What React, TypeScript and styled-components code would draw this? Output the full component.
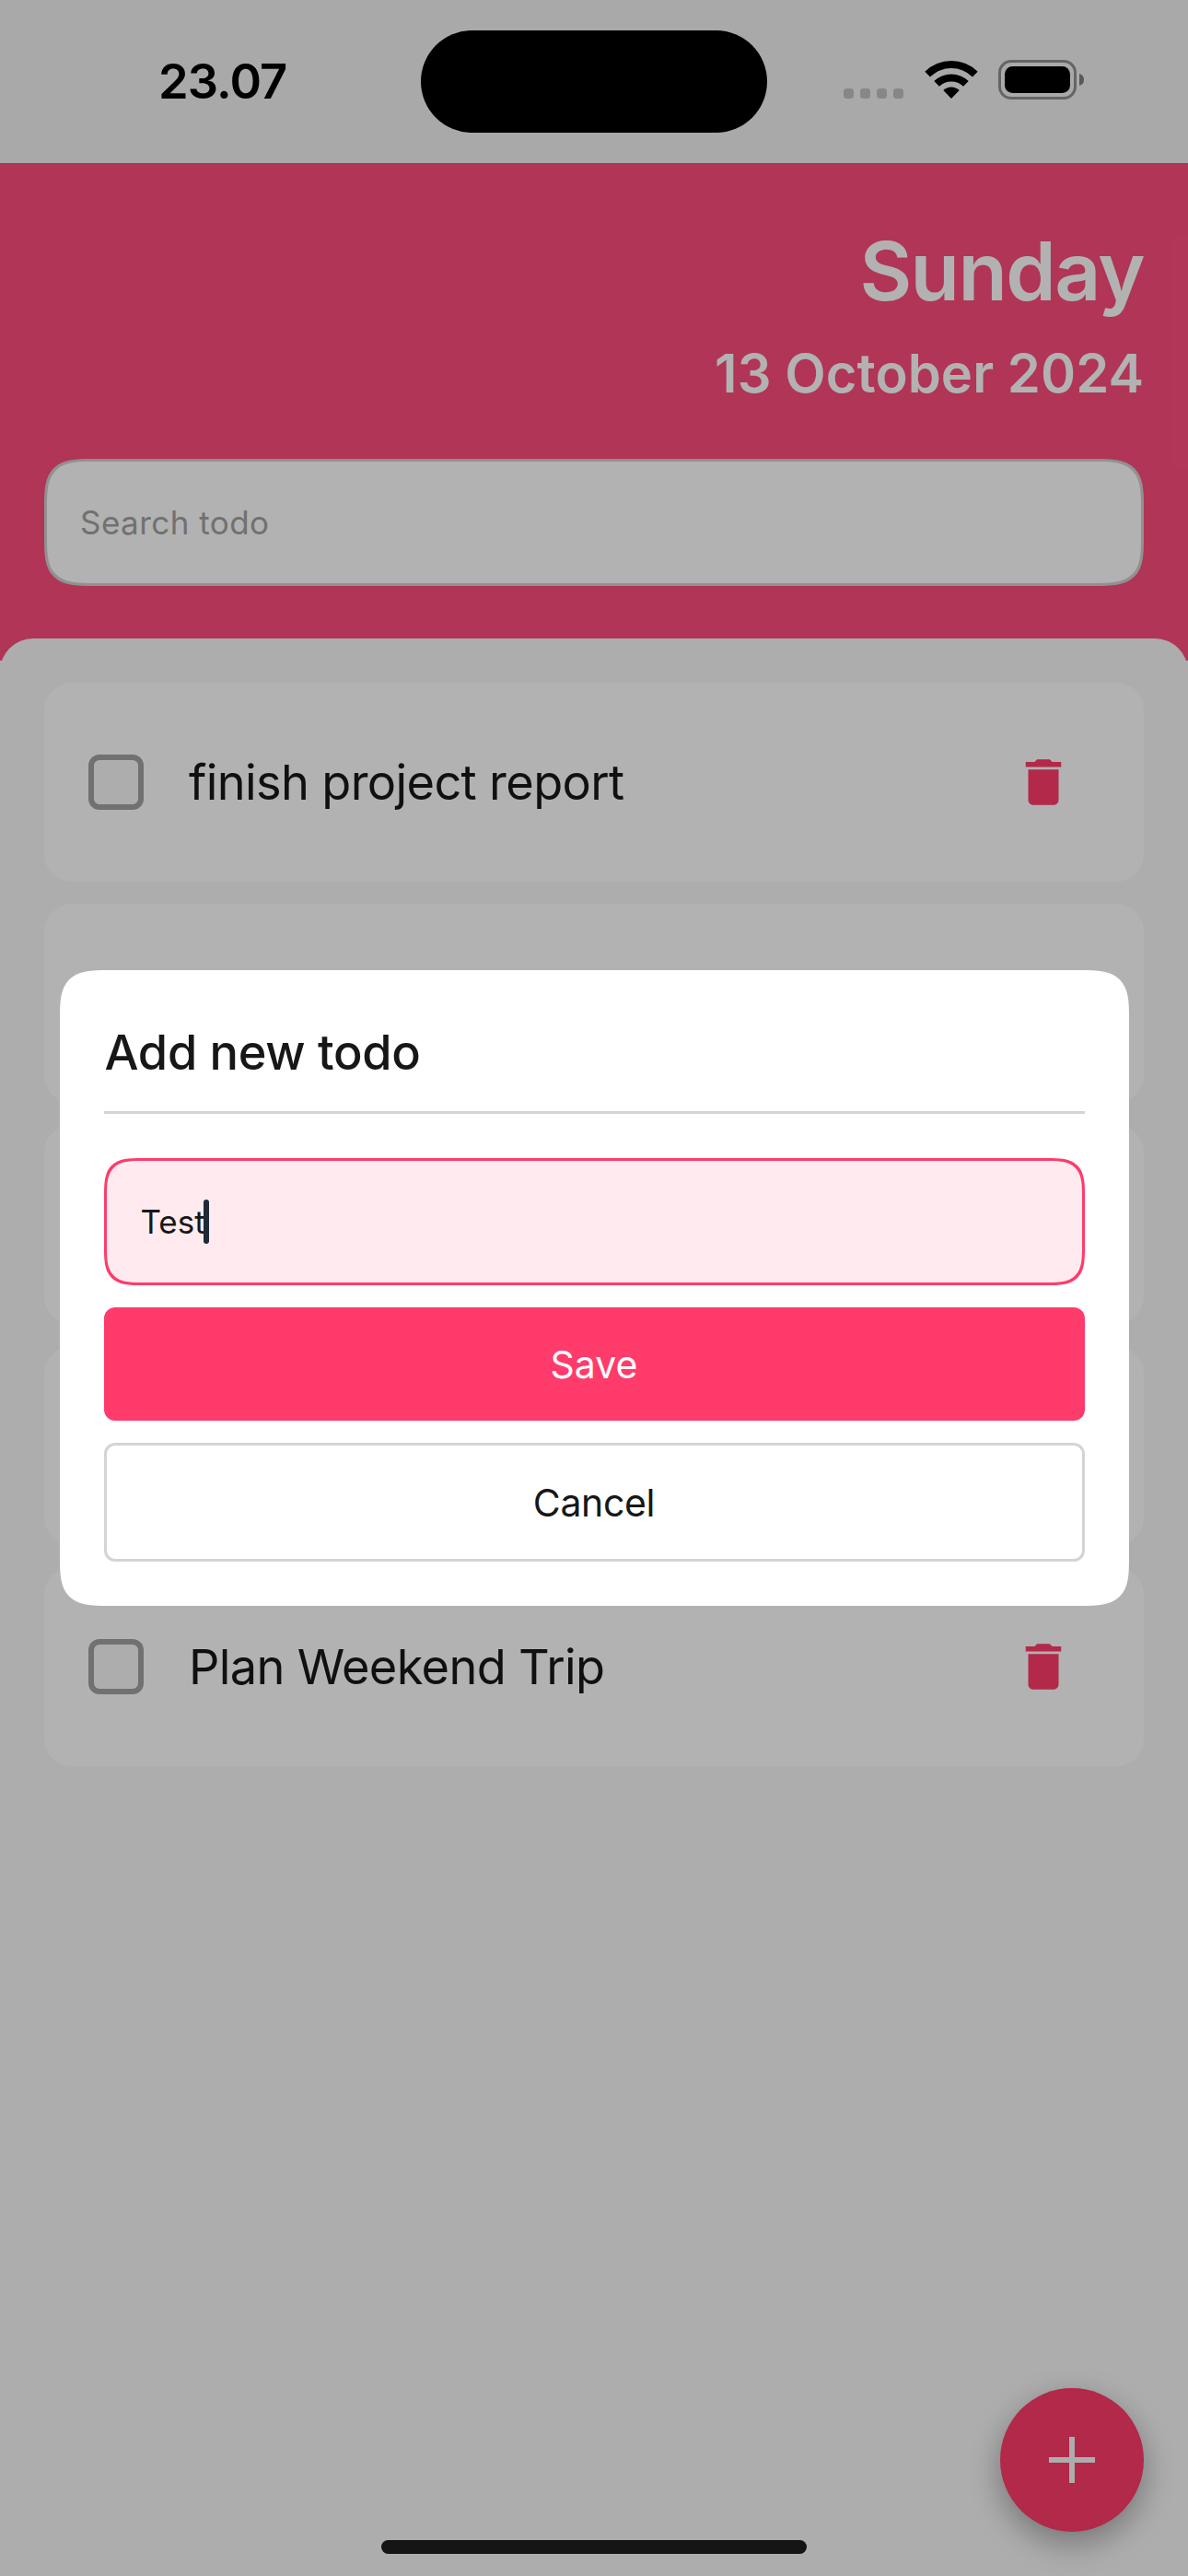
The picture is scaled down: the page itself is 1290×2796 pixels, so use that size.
import React from "react";
import styled, { createGlobalStyle } from "styled-components";

const GlobalStyle = createGlobalStyle`
  * { box-sizing: border-box; }
  html, body { margin: 0; padding: 0; background: #f8f8f8; }
  body { font-family: Inter, "Liberation Sans", sans-serif; color: #171717; }
  button, input { font: inherit; margin: 0; }
`;

const Screen = styled.div`
  position: relative;
  width: 1290px;
  height: 2796px;
  overflow: hidden;
  display: flex;
  flex-direction: column;
  background: #f8f8f8;
`;

const StatusBar = styled.div`
  flex: none;
  height: 177px;
  display: grid;
  grid-template-columns: 457px 376px 1fr;
  align-items: start;
  background: #f3f3f3;
`;

const Time = styled.div`
  padding: 58px 0 0 172px;
  font-size: 52.4px;
  line-height: 60px;
  font-weight: 600;
  color: #000;
  letter-spacing: -0.9px;
  white-space: nowrap;
`;

const Island = styled.div`
  height: 111px;
  margin-top: 33px;
  border-radius: 56px;
  background: #000;
`;

const StatusIcons = styled.div`
  display: flex;
  align-items: flex-end;
  padding: 65px 0 0 83px;
`;

const Dots = styled.div`
  display: flex;
  gap: 7px;
  padding-bottom: 1px;
`;

const Dot = styled.i`
  width: 11px;
  height: 11px;
  border-radius: 3.5px;
  background: #c2c2c2;
`;

const WifiIcon = styled.svg`
  width: 58px;
  height: 43px;
  margin-left: 22.5px;
`;

const BatteryIcon = styled.svg`
  width: 94px;
  height: 43px;
  margin-left: 22.5px;
`;

const Header = styled.header`
  flex: none;
  height: 540px;
  padding: 64px 48px 0;
  display: flex;
  flex-direction: column;
  background: #fe4d7c;
  color: #fff;
`;

const Day = styled.h1`
  margin: 0;
  height: 108px;
  line-height: 106px;
  font-size: 87.3px;
  font-weight: 600;
  text-align: right;
  letter-spacing: -1.6px;
`;

const DateLine = styled.h2`
  margin: 20px 0 0;
  height: 72px;
  line-height: 73px;
  font-size: 57.8px;
  font-weight: 600;
  text-align: right;
  letter-spacing: 0.1px;
`;

const Search = styled.div`
  height: 138px;
  margin-top: 57px;
  padding: 0 36px;
  border: 3px solid #d0d0d0;
  border-radius: 36px;
  background: #fff;
  color: #a3a3a3;
  font-size: 35px;
  line-height: 132px;
  letter-spacing: 0.45px;
  @supports (corner-shape: squircle) {
    border-radius: 53px;
    corner-shape: superellipse(1.7);
  }
`;

const List = styled.main`
  flex: 1;
  margin-top: -24px;
  padding: 48px;
  display: flex;
  flex-direction: column;
  gap: 24px;
  border-radius: 36px 36px 0 0;
  background: #f8f8f8;
`;

const Card = styled.div`
  height: 216px;
  flex: none;
  padding: 0 76px 0 48px;
  display: flex;
  align-items: center;
  border-radius: 30px;
  background: #fff;
`;

const Checkbox = styled.span`
  width: 60px;
  height: 60px;
  border: 6px solid #a3a3a3;
  border-radius: 12px;
  background: #f8f8f8;
`;

const Label = styled.span`
  flex: 1;
  margin-left: 49px;
  font-size: 52.3px;
  line-height: 72px;
  letter-spacing: -0.65px;
  white-space: nowrap;
`;

const TrashIcon = styled.svg`
  width: 66px;
  height: 66px;
  fill: #ff3b6b;
`;

const Fab = styled.div`
  position: absolute;
  right: 48px;
  bottom: 48px;
  width: 156px;
  height: 156px;
  border-radius: 50%;
  display: grid;
  place-items: center;
  background: #ff3b6b;
  box-shadow: 0 12px 34px rgba(0, 0, 0, 0.32);
`;

const PlusIcon = styled.svg`
  width: 50px;
  height: 50px;
  fill: #f8f8f8;
`;

const Scrim = styled.div`
  position: absolute;
  inset: 0;
  display: flex;
  align-items: center;
  justify-content: center;
  background: rgba(0, 0, 0, 0.3);
`;

const Dialog = styled.section`
  width: 1161px;
  height: 690px;
  padding: 48px;
  display: flex;
  flex-direction: column;
  border-radius: 36px;
  background: #fff;
  @supports (corner-shape: squircle) {
    border-radius: 53px;
    corner-shape: superellipse(1.7);
  }
`;

const Title = styled.h3`
  margin: 0 0 48px;
  height: 108px;
  padding-left: 1px;
  border-bottom: 3px solid #d4d4d4;
  font-size: 52.3px;
  line-height: 82px;
  font-weight: 500;
  letter-spacing: -0.3px;
`;

const Field = styled.div`
  display: flex;
  align-items: center;
  height: 138px;
  padding: 0 37px;
  border: 3px solid #ff3b6b;
  border-radius: 28px;
  background: #ffebef;
  font-size: 35px;
  letter-spacing: 0px;
  @supports (corner-shape: squircle) {
    border-radius: 42px;
    corner-shape: superellipse(1.7);
  }
`;

const Caret = styled.i`
  width: 6px;
  height: 48px;
  margin-left: -2px;
  border-radius: 3px;
  background: #1f2937;
`;

const Button = styled.button<{ $primary?: boolean }>`
  height: ${(p) => (p.$primary ? 123 : 129)}px;
  margin-top: 24px;
  padding: 0;
  border: ${(p) => (p.$primary ? "none" : "3px solid #d4d4d4")};
  border-radius: 12px;
  background: ${(p) => (p.$primary ? "#ff3b6b" : "#fff")};
  color: ${(p) => (p.$primary ? "#fff" : "#171717")};
  font-size: 41px;
  letter-spacing: ${(p) => (p.$primary ? 0 : -0.35)}px;
`;

const HomeIndicator = styled.div`
  position: absolute;
  left: 414px;
  bottom: 24px;
  width: 462px;
  height: 15px;
  border-radius: 8px;
  background: #151515;
`;

const todos = [
  "finish project report",
  "",
  "",
  "",
  "Plan Weekend Trip",
];

export default function App() {
  return (
    <Screen>
      <GlobalStyle />
      <StatusBar>
        <Time>23.07</Time>
        <Island />
        <StatusIcons>
          <Dots>
            <Dot />
            <Dot />
            <Dot />
            <Dot />
          </Dots>
          <WifiIcon viewBox="0 0 58 43">
            <path d="M0.3 12.8A41 41 0 0 1 57.7 12.8L52 18.5A32.6 32.6 0 0 0 6 18.5Z" />
            <path d="M10.3 23A27 27 0 0 1 47.7 23L42 28.7A18.7 18.7 0 0 0 16 28.7Z" />
            <path d="M20.3 33A12.5 12.5 0 0 1 37.7 33L29 42Z" />
          </WifiIcon>
          <BatteryIcon viewBox="0 0 94 43">
            <rect x="1.5" y="1.5" width="82" height="40" rx="12.5" fill="none" stroke="#919191" strokeWidth="3" />
            <rect x="7" y="7" width="71" height="29" rx="8.5" />
            <path d="M88 15Q93 16.500 93 21.500T88 28Z" fill="#808080" />
          </BatteryIcon>
        </StatusIcons>
      </StatusBar>
      <Header>
        <Day>Sunday</Day>
        <DateLine>13 October 2024</DateLine>
        <Search>Search todo</Search>
      </Header>
      <List>
        {todos.map((text, i) => (
          <Card key={i}>
            {text && (
              <>
                <Checkbox />
                <Label>{text}</Label>
                <TrashIcon viewBox="0 0 24 24">
                  <path d="M6 19c0 1.100.9 2 2 2h8c1.100 0 2-.9 2-2V7H6v12zM19 4h-3.500l-1-1h-5l-1 1H5v2h14V4z" />
                </TrashIcon>
              </>
            )}
          </Card>
        ))}
      </List>
      <Fab>
        <PlusIcon viewBox="0 0 50 50">
          <path d="M22 0h6v22h22v6H28v22h-6V28H0v-6h22z" />
        </PlusIcon>
      </Fab>
      <Scrim>
        <Dialog>
          <Title>Add new todo</Title>
          <Field>
            Test
            <Caret />
          </Field>
          <Button $primary>Save</Button>
          <Button>Cancel</Button>
        </Dialog>
      </Scrim>
      <HomeIndicator />
    </Screen>
  );
}
